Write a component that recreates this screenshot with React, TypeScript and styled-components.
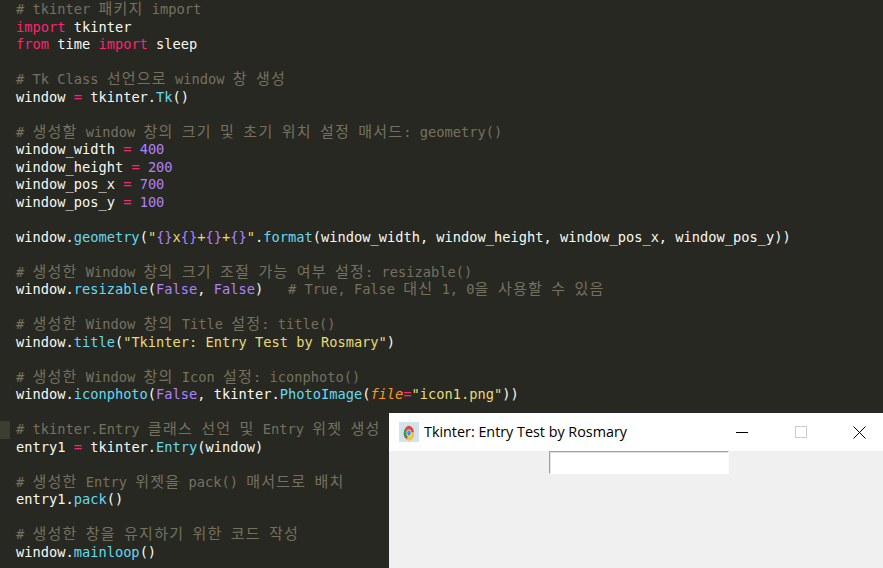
import React from 'react';
import styled, { createGlobalStyle } from 'styled-components';

type Kind = 'plain' | 'comment' | 'keyword' | 'call' | 'number' | 'string' | 'param';
type Token = [Kind, string];

const palette: Record<Kind, string> = {
  plain: '#f8f8f2',
  comment: '#75715e',
  keyword: '#f92672',
  call: '#66d9ef',
  number: '#ae81ff',
  string: '#e6db74',
  param: '#fd971f',
};

const c = (text: string): Token[] => [['comment', text]];
const assign = (name: string, value: string): Token[] => [
  ['plain', name + ' '],
  ['keyword', '='],
  ['plain', ' '],
  ['number', value],
];

const source: Token[][] = [
  c('# tkinter 패키지 import'),
  [['keyword', 'import'], ['plain', ' tkinter']],
  [['keyword', 'from'], ['plain', ' time '], ['keyword', 'import'], ['plain', ' sleep']],
  [],
  c('# Tk Class 선언으로 window 창 생성'),
  [['plain', 'window '], ['keyword', '='], ['plain', ' tkinter.'], ['call', 'Tk'], ['plain', '()']],
  [],
  c('# 생성할 window 창의 크기 및 초기 위치 설정 매서드: geometry()'),
  assign('window_width', '400'),
  assign('window_height', '200'),
  assign('window_pos_x', '700'),
  assign('window_pos_y', '100'),
  [],
  [
    ['plain', 'window.'],
    ['call', 'geometry'],
    ['plain', '('],
    ['string', '"'],
    ['number', '{}'],
    ['string', 'x'],
    ['number', '{}'],
    ['string', '+'],
    ['number', '{}'],
    ['string', '+'],
    ['number', '{}'],
    ['string', '"'],
    ['plain', '.'],
    ['call', 'format'],
    ['plain', '(window_width, window_height, window_pos_x, window_pos_y))'],
  ],
  [],
  c('# 생성한 Window 창의 크기 조절 가능 여부 설정: resizable()'),
  [
    ['plain', 'window.'],
    ['call', 'resizable'],
    ['plain', '('],
    ['number', 'False'],
    ['plain', ', '],
    ['number', 'False'],
    ['plain', ')   '],
    ['comment', '# True, False 대신 1, 0을 사용할 수 있음'],
  ],
  [],
  c('# 생성한 Window 창의 Title 설정: title()'),
  [
    ['plain', 'window.'],
    ['call', 'title'],
    ['plain', '('],
    ['string', '"Tkinter: Entry Test by Rosmary"'],
    ['plain', ')'],
  ],
  [],
  c('# 생성한 Window 창의 Icon 설정: iconphoto()'),
  [
    ['plain', 'window.'],
    ['call', 'iconphoto'],
    ['plain', '('],
    ['number', 'False'],
    ['plain', ', tkinter.'],
    ['call', 'PhotoImage'],
    ['plain', '('],
    ['param', 'file'],
    ['keyword', '='],
    ['string', '"icon1.png"'],
    ['plain', '))'],
  ],
  [],
  c('# tkinter.Entry 클래스 선언 및 Entry 위젯 생성'),
  [
    ['plain', 'entry1 '],
    ['keyword', '='],
    ['plain', ' tkinter.'],
    ['call', 'Entry'],
    ['plain', '(window)'],
  ],
  [],
  c('# 생성한 Entry 위젯을 pack() 매서드로 배치'),
  [['plain', 'entry1.'], ['call', 'pack'], ['plain', '()']],
  [],
  c('# 생성한 창을 유지하기 위한 코드 작성'),
  [['plain', 'window.'], ['call', 'mainloop'], ['plain', '()']],
];

const ACTIVE_LINE = 24;

const GlobalStyle = createGlobalStyle`
  html, body {
    margin: 0;
    height: 100%;
    overflow: hidden;
    background: #272822;
  }
`;

const Screen = styled.div`
  position: relative;
  width: 883px;
  height: 568px;
  overflow: hidden;
  background: #272822;
`;

const Code = styled.pre`
  margin: 0;
  padding-top: 1px;
  font-family: "DejaVu Sans Mono", "Liberation Mono", "Noto Sans CJK KR", monospace;
  font-size: 13.7px;
`;

const Line = styled.div<{ $active?: boolean }>`
  height: 17.5px;
  line-height: 17.5px;
  padding-left: 16px;
  background: ${(p) =>
    p.$active ? 'linear-gradient(to right, #3e3d32 10px, transparent 10px)' : 'none'};
`;

const Piece = styled.span<{ $kind: Kind }>`
  color: ${(p) => palette[p.$kind]};
  font-style: ${(p) => (p.$kind === 'param' ? 'italic' : 'normal')};
`;

const Hangul = styled.span`
  font-family: "Noto Sans CJK KR", sans-serif;
  font-size: 15px;
  line-height: 0;
  letter-spacing: 1.22px;
`;

const TkWindow = styled.div`
  position: absolute;
  left: 389px;
  top: 413px;
  width: 500px;
  height: 155px;
  display: flex;
  flex-direction: column;
  background: #f0f0f0;
`;

const TitleBar = styled.div`
  height: 38px;
  display: flex;
  align-items: center;
  background: #ffffff;
  padding-left: 10px;
`;

const AppIcon = styled.svg`
  width: 20px;
  height: 20px;
  flex: none;
`;

const Title = styled.div`
  margin: -2px 0 0 5px;
  flex: 1;
  font-family: "Open Sans", sans-serif;
  font-size: 14.35px;
  color: #000000;
  white-space: nowrap;
`;

const Caption = styled.button`
  width: 59px;
  height: 38px;
  padding: 0;
  border: 0;
  background: none;
  display: flex;
  align-items: center;
  justify-content: center;
`;

const Body = styled.div`
  flex: 1;
  display: flex;
  justify-content: center;
`;

const Entry = styled.input`
  box-sizing: border-box;
  width: 180px;
  height: 23px;
  padding: 0;
  margin: 0;
  background: #ffffff;
  border: 1px solid #fbfbfb;
  border-top-color: #a0a0a0;
  border-left-color: #a0a0a0;
  box-shadow: inset 1px 1px 0 #e3e3e3;
`;

function renderText(text: string) {
  return text.split(/([\uac00-\ud7a3]+)/).map((part, i) =>
    /[\uac00-\ud7a3]/.test(part) ? <Hangul key={i}>{part}</Hangul> : part,
  );
}

export default function App() {
  return (
    <Screen>
      <GlobalStyle />
      <Code>
        {source.map((tokens, i) => (
          <Line key={i} $active={i === ACTIVE_LINE}>
            {tokens.map(([kind, text], j) => (
              <Piece key={j} $kind={kind}>
                {renderText(text)}
              </Piece>
            ))}
          </Line>
        ))}
      </Code>
      <TkWindow>
        <TitleBar>
          <AppIcon viewBox="0 0 20 20">
            <rect width="20" height="20" fill="#d4e3ea" />
            <g transform="translate(10 11) scale(0.78 1.1) translate(-10 -10)">
              <circle cx="10" cy="10" r="6.5" fill="#e0483c" />
              <path d="M10 10 L5.2 15 A6.5 6.5 0 0 1 4.4 6.8 Z" fill="#3a9d4f" />
              <path d="M10 10 L16.4 9 A6.5 6.5 0 0 1 7 16 Z" fill="#f5c63c" />
              <circle cx="10" cy="10" r="3.2" fill="#e8eef2" />
              <circle cx="10" cy="10" r="2.4" fill="#4a86e0" />
            </g>
          </AppIcon>
          <Title>Tkinter: Entry Test by Rosmary</Title>
          <Caption aria-label="minimize">
            <svg width="12" height="12" viewBox="0 0 12 12">
              <path d="M0 6.5H12" stroke="#000" strokeWidth="1" />
            </svg>
          </Caption>
          <Caption aria-label="maximize">
            <svg width="12" height="12" viewBox="0 0 12 12">
              <rect x="0.5" y="0.5" width="11" height="11" fill="none" stroke="#cccccc" />
            </svg>
          </Caption>
          <Caption aria-label="close">
            <svg width="13" height="13" viewBox="0 0 13 13">
              <path d="M0.5 0.5L12.5 12.5M12.5 0.5L0.5 12.5" stroke="#000" strokeWidth="1" />
            </svg>
          </Caption>
        </TitleBar>
        <Body>
          <Entry />
        </Body>
      </TkWindow>
    </Screen>
  );
}
